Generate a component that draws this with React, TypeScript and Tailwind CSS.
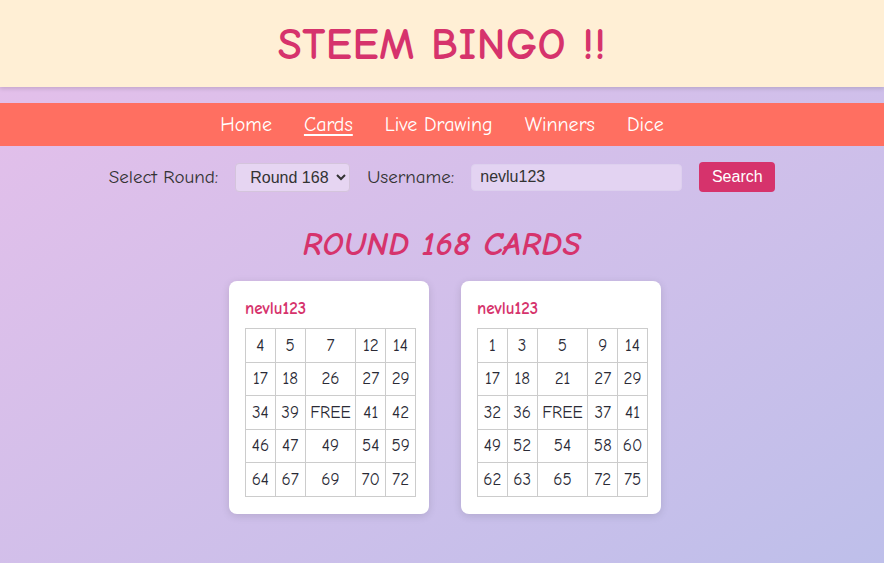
import React from "react";

const comic = { fontFamily: '"Comic Sans MS", "Comic Neue", "DejaVu Sans", sans-serif' };
const arial = { fontFamily: '"Liberation Sans", Arial, sans-serif' };

const cards = [
  {
    user: "nevlu123",
    rows: [
      ["4", "5", "7", "12", "14"],
      ["17", "18", "26", "27", "29"],
      ["34", "39", "FREE", "41", "42"],
      ["46", "47", "49", "54", "59"],
      ["64", "67", "69", "70", "72"],
    ],
  },
  {
    user: "nevlu123",
    rows: [
      ["1", "3", "5", "9", "14"],
      ["17", "18", "21", "27", "29"],
      ["32", "36", "FREE", "37", "41"],
      ["49", "52", "54", "58", "60"],
      ["62", "63", "65", "72", "75"],
    ],
  },
];

const navLinks = ["Home", "Cards", "Live Drawing", "Winners", "Dice"];

export default function App() {
  return (
    <div
      className="min-h-[563px] w-full bg-gradient-to-br from-[#e6bfea] to-[#bebfea] text-[#333]"
      style={comic}
    >
      {/* Header */}
      <header className="h-[87px] bg-[#ffefd5] shadow-[0_2px_4px_rgba(0,0,0,0.12)] flex items-center justify-center">
        <h1 className="text-[44px] font-bold text-[#d6336c] tracking-[0.5px] mt-[2px]">STEEM BINGO !!</h1>
      </header>

      {/* Nav */}
      <nav className="mt-4 h-[43px] bg-[#ff6f61] flex items-center justify-center gap-8">
        {navLinks.map((l) => (
          <a
            key={l}
            href="#"
            className={`text-white text-[20px] ${l === "Cards" ? "underline underline-offset-[3px]" : ""}`}
          >
            {l}
          </a>
        ))}
      </nav>

      {/* Search form */}
      <div className="flex items-center justify-center gap-[17px] mt-4 h-[30px] text-[19px]">
        <label>Select Round:</label>
        <select
          className="h-[29px] w-[115px] pl-[10px] pr-0 rounded bg-[#e6d5f2] border border-[#d4c4dc] text-[16px] text-[#333]"
          style={arial}
        >
          <option>Round 168</option>
        </select>
        <label>Username:</label>
        <input
          defaultValue="nevlu123"
          className="h-[27px] w-[211px] px-2 rounded bg-[#e3d3f2] border border-[#ddd0ee] text-[16px] text-[#333] outline-none"
          style={arial}
        />
        <button className="h-[30px] w-[76px] rounded bg-[#d6336c] text-white text-[16px]" style={arial}>
          Search
        </button>
      </div>

      {/* Heading */}
      <h2 className="text-center mt-[27px] text-[33px] leading-[50px] font-bold italic text-[#d6336c] tracking-[0.5px]">
        ROUND 168 CARDS
      </h2>

      {/* Cards */}
      <div className="flex justify-center gap-8 mt-[12px] pl-[6px] pb-12">
        {cards.map((c, i) => (
          <div key={i} className="bg-white rounded-lg shadow-[0_2px_8px_rgba(0,0,0,0.12)] px-4 pt-[18px] pb-[17px] w-[200px]">
            <div className="text-[17px] font-bold text-[#d6336c] leading-5 mb-[9px]">{c.user}</div>
            <table className="border-collapse w-[171px]">
              <tbody>
                {c.rows.map((r, ri) => (
                  <tr key={ri}>
                    {r.map((n, ni) => (
                      <td
                        key={ni}
                        className={`border border-[#ccc] text-center text-[17px] text-[#2a2a35] h-[33.6px] px-0 ${
                          ni === 2 ? "w-[51px]" : "w-[30px]"
                        }`}
                      >
                        {n}
                      </td>
                    ))}
                  </tr>
                ))}
              </tbody>
            </table>
          </div>
        ))}
      </div>
    </div>
  );
}
